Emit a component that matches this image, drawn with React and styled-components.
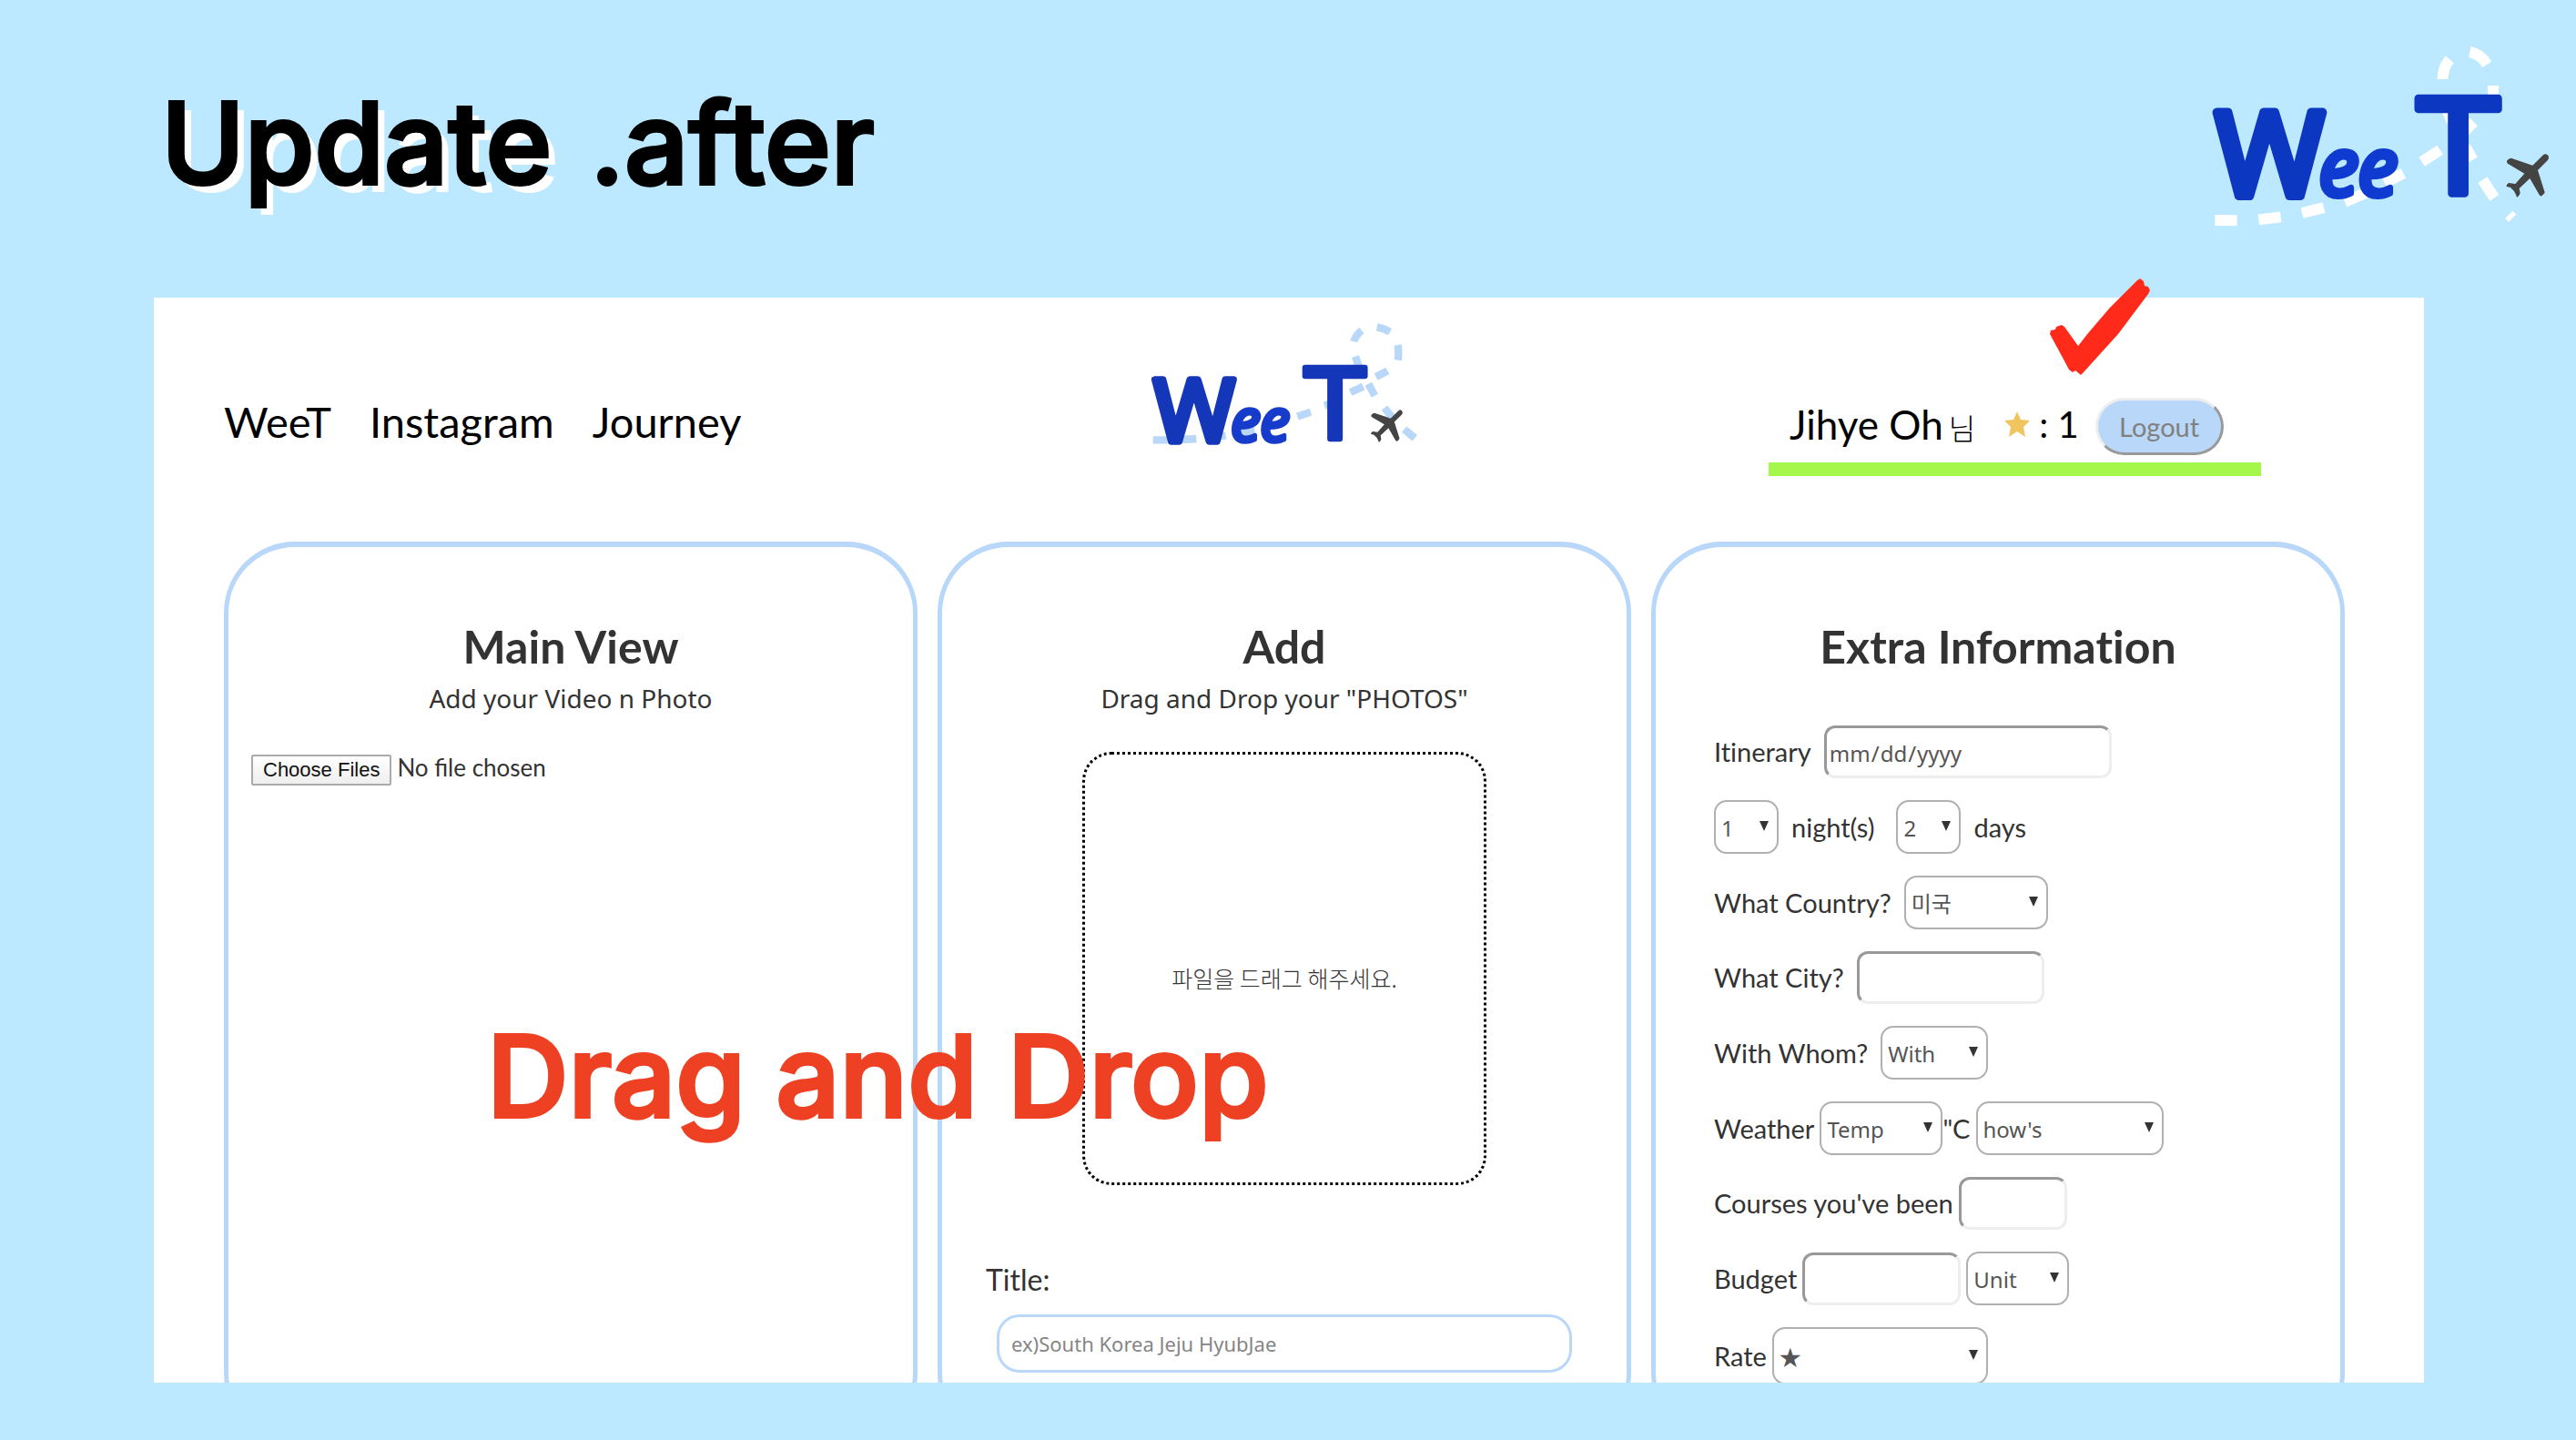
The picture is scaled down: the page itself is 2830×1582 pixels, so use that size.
import React from "react";
import styled, { createGlobalStyle, css } from "styled-components";

const sky = "#bce9ff";
const line = "#b9d7f8";
const hand = `Lato, "Noto Sans CJK KR", sans-serif`;
const plain = `"Noto Sans", "Noto Sans CJK KR", sans-serif`;
const round = `Inter, "Noto Sans CJK KR", sans-serif`;

const GlobalStyle = createGlobalStyle`
  * { box-sizing: border-box; }
  body { margin: 0; background: ${sky}; }
`;

const Slide = styled.div`
  height: 100vh;
  padding: 0 167px 63px 169px;
  display: flex;
  flex-direction: column;
  overflow: hidden;
  background: ${sky};
  font-family: ${hand};
  font-variant-ligatures: none;
  color: #333;
`;

const SlideHeader = styled.header`
  display: flex;
  justify-content: space-between;
  align-items: flex-start;
  height: 327px;
  flex: none;
  margin-right: -167px;
  padding-top: 30px;
`;

const bigText = css`
  margin: 0;
  font-family: ${round};
  font-size: 124px;
  line-height: 124px;
  font-weight: 500;
  -webkit-text-stroke: 4px currentColor;
  white-space: nowrap;
`;

const SlideTitle = styled.h1`
  ${bigText}
  display: flex;
  gap: 42px;
  padding: 65px 0 0 8px;
  color: #000;
`;

const Shadowed = styled.span`
  text-shadow: 9px 9px 0 #fff;
`;

const Panel = styled.main`
  position: relative;
  flex: 1;
  min-height: 0;
  display: flex;
  flex-direction: column;
  padding: 0 87px 0 77px;
  background: #fff;
`;

const Callout = styled.p`
  ${bigText}
  position: absolute;
  left: 366px;
  top: 793px;
  color: #ee4023;
  pointer-events: none;
`;

const SiteHeader = styled.header`
  flex: none;
  display: grid;
  grid-template-columns: 1fr auto 1fr;
  align-items: start;
  height: 268px;
  padding-top: 3px;
  color: #000;
`;

const Nav = styled.nav`
  display: flex;
  gap: 42px;
  padding-top: 104px;
`;

const NavLink = styled.a`
  font-size: 47px;
  line-height: 58px;
  color: inherit;
  text-decoration: none;
`;

const Account = styled.div`
  position: relative;
  justify-self: end;
  display: flex;
  align-items: flex-start;
  width: 541px;
  margin: 107px 92px 0 0;
  padding: 0 23px 8px;
  border-bottom: 15px solid #a6f74c;
  font-size: 44px;
  line-height: 58px;
`;

const UserName = styled.span`
  margin-right: 32px;
`;

const Suffix = styled.span`
  margin-left: 6px;
  font-family: "Noto Sans CJK KR", sans-serif;
  font-size: 32px;
  line-height: 32px;
  font-weight: 300;
`;

const Points = styled.span`
  display: flex;
  align-items: center;
  gap: 10px;
  margin-right: 18px;
  font-size: 40px;
`;

const LogoutButton = styled.button`
  width: 141px;
  height: 63px;
  padding: 0;
  border: 3px solid;
  border-color: #eee #999 #999 #eee;
  border-radius: 32px;
  background: ${line};
  color: #808080;
  font-family: ${hand};
  font-size: 29px;
`;

const Tick = styled.svg`
  position: absolute;
  right: 121px;
  top: -132px;
`;

const Cards = styled.div`
  flex: 1;
  min-height: 0;
  overflow: hidden;
  display: grid;
  grid-template-columns: repeat(3, minmax(0, 1fr));
  gap: 22px;
`;

const Card = styled.section`
  display: flex;
  flex-direction: column;
  padding: 79px ${(p) => p.$side}px 60px;
  border: 5px solid ${line};
  border-top-width: 6px;
  border-radius: 78px;
`;

const CardTitle = styled.h2`
  margin: 0;
  font-size: 50px;
  line-height: 60px;
  font-weight: 700;
  text-align: center;
`;

const CardNote = styled.p`
  margin: 8px 0 40px;
  font-family: ${plain};
  font-size: 28px;
  line-height: 38px;
  text-align: center;
`;

const FileInput = styled.input`
  font-family: ${hand};
  font-size: 26px;
  line-height: 34px;
  color: #333;
  &::file-selector-button {
    height: 34px;
    margin: 0 6px 0 0;
    padding: 0 11px;
    border: 2px solid #aaa;
    border-radius: 2px;
    background: linear-gradient(#fff, #eee);
    color: #111;
    font-family: "Liberation Sans", sans-serif;
    font-size: 22px;
  }
`;

const DropZone = styled.div`
  align-self: center;
  display: grid;
  place-items: center;
  width: 444px;
  height: 476px;
  padding-top: 20px;
  border: 3px dotted #000;
  border-radius: 32px;
  font-family: "Noto Sans CJK KR", sans-serif;
  font-weight: 300;
  font-size: 25px;
`;

const TitleLabel = styled.label`
  margin: 84px 0 18px;
  font-size: 32px;
  line-height: 40px;
`;

const TitleInput = styled.input`
  margin: 0 12px;
  height: 64px;
  padding: 0 13px;
  border: 3px solid ${line};
  border-radius: 25px;
  font-family: ${plain};
  font-size: 22px;
  &::placeholder { color: #858585; }
`;

const Form = styled.form`
  display: flex;
  flex-direction: column;
  gap: 24px;
  padding-top: 57px;
`;

const Row = styled.div`
  display: flex;
  align-items: center;
  gap: ${(p) => p.$gap ?? 14}px;
  font-size: 29px;
  line-height: 40px;
  white-space: nowrap;
`;

const field = css`
  width: ${(p) => p.$w}px;
  font-family: ${plain};
  font-size: 24px;
  color: #555;
  background: #fff;
`;

const Field = styled.input`
  ${field}
  height: 58px;
  padding: 2px 2px 0;
  border: 3px solid;
  border-color: #999 #eee #eee #999;
  border-radius: 12px;
  &::-webkit-calendar-picker-indicator { display: none; }
`;

const SelectBox = styled.span`
  display: inline-grid;
  align-items: center;
  & > * { grid-area: 1 / 1; }
  & > svg {
    justify-self: end;
    margin: 0 11px 2px 0;
    pointer-events: none;
  }
`;

const NativeSelect = styled.select`
  ${field}
  height: ${(p) => p.$h || 59}px;
  padding: 2px 6px 0;
  border: 2px solid #b0b0b0;
  border-radius: 14px;
  appearance: none;
`;

function Select({ value, w, h, ...rest }) {
  return (
    <SelectBox>
      <NativeSelect $w={w} $h={h} {...rest}>
        <option>{value}</option>
      </NativeSelect>
      <svg width="10" height="11" viewBox="0 0 10 11" aria-hidden="true">
        <path d="M0 0h10L5 11z" fill="#333" />
      </svg>
    </SelectBox>
  );
}

const Logo = styled.svg`
  overflow: visible;
`;

const LogoMark = ({ main, small }) => (
  <g>
    <g fill={main} stroke={main} strokeLinejoin="round">
      <text x="102" y="556" fontFamily="Noto Sans, sans-serif" fontSize="384" strokeWidth="30">W</text>
      <text x="772" y="545" fontFamily="DejaVu Sans, sans-serif" fontSize="426" strokeWidth="26">T</text>
    </g>
    <text x="442 571" y="556" fontFamily="Noto Sans, sans-serif" fontStyle="italic" fontSize="266" fill={small} stroke={small} strokeWidth="18" strokeLinejoin="round">ee</text>
    <path
      fill="#444"
      d="M1182 421Q1192 413 1199 424Q1202 432 1196 439L1164 471L1187 544Q1186 549 1177 556Q1172 557 1169 552L1138 498L1103 531L1106 547Q1104 554 1097 560Q1093 558 1092 551L1086 540L1074 528L1060 524Q1062 517 1068 513L1090 516L1120 482L1065 449Q1061 445 1062 440Q1067 432 1076 431L1147 455Z"
    />
  </g>
);

const SlideLogo = () => (
  <Logo width="430" height="240" viewBox="0 0 1290 720" role="img" aria-label="Wee T">
    <g fill="none" stroke="#fff" strokeWidth="36">
      <path d="M100 636L173 637M244 634L317 625M387 612L459 594M528 575L597 546M659 513L721 481M782 443L842 404M915 350L953 312M1017 225V192M997 122Q975 88 940 81M874 106Q850 132 851 171M861 262L881 310M925 395L950 437M982 503L1021 562" />
      <path strokeWidth="16" d="M1062 636L1087 611" />
    </g>
    <LogoMark main="#0c37c0" small="#103bd1" />
  </Logo>
);

const SiteLogo = () => (
  <Logo width="360" height="180" viewBox="0 0 1080 540" role="img" aria-label="Wee T">
    <path
      fill="none"
      stroke={line}
      strokeWidth="25"
      d="M107 460H155M200 459L250 456M300 452L347 446M397 438L442 428M583 383L627 368M672 347L705 335M758 303L800 284M842 252L880 232M914 197Q918 170 914 147M888 104Q868 92 845 88M795 99Q774 116 769 136M774 185L785 217M817 275L838 314M870 354L896 387M935 425L970 454"
    />
    <g transform="translate(33 49) scale(0.747)">
      <LogoMark main="#1436b8" small="#173ccb" />
    </g>
  </Logo>
);

export default function App() {
  return (
    <Slide>
      <GlobalStyle />
      <SlideHeader>
        <SlideTitle>
          <Shadowed>Update</Shadowed>
          <span>.after</span>
        </SlideTitle>
        <SlideLogo />
      </SlideHeader>
      <Panel>
        <SiteHeader>
          <Nav>
            <NavLink href="#weet">WeeT</NavLink>
            <NavLink href="#instagram">Instagram</NavLink>
            <NavLink href="#journey">Journey</NavLink>
          </Nav>
          <SiteLogo />
          <Account>
            <UserName>
              Jihye Oh<Suffix>님</Suffix>
            </UserName>
            <Points>
              <svg width="28" height="28" viewBox="0 0 28 28" aria-hidden="true">
                <path fill="#f0c560" d="M14 0L18 9L28 10L21 17L23 28L14 22L5 28L7 17L0 10L10 9Z" />
              </svg>
              <span>: 1</span>
            </Points>
            <LogoutButton type="button">Logout</LogoutButton>
            <Tick width="112" height="108" viewBox="0 0 112 108" aria-hidden="true">
              <path
                fill="#ff2a1a"
                d="M100 1L104 4L105 9L109 10L111 14L109 18L76 62L37 105L35 107L29 102L26 104L22 101L14 86L1 62L2 58L7 57L8 54L14 52L17 54L32 75L43 61L67 33L97 3Z"
              />
            </Tick>
          </Account>
        </SiteHeader>
        <Cards>
          <Card $side={25}>
            <CardTitle>Main View</CardTitle>
            <CardNote>Add your Video n Photo</CardNote>
            <FileInput type="file" multiple aria-label="Video and photo files" />
          </Card>
          <Card $side={48}>
            <CardTitle>Add</CardTitle>
            <CardNote>Drag and Drop your "PHOTOS"</CardNote>
            <DropZone>파일을 드래그 해주세요.</DropZone>
            <TitleLabel htmlFor="title">Title:</TitleLabel>
            <TitleInput id="title" placeholder="ex)South Korea Jeju HyubJae" />
          </Card>
          <Card $side={64}>
            <CardTitle>Extra Information</CardTitle>
            <Form>
              <Row>
                <label htmlFor="date">Itinerary</label>
                <Field id="date" type="date" $w={316} />
              </Row>
              <Row $gap={24}>
                <Row>
                  <Select id="nights" value="1" w={71} />
                  <label htmlFor="nights">night(s)</label>
                </Row>
                <Row>
                  <Select id="days" value="2" w={71} />
                  <label htmlFor="days">days</label>
                </Row>
              </Row>
              <Row>
                <label htmlFor="country">What Country?</label>
                <Select id="country" value="미국" w={158} />
              </Row>
              <Row>
                <label htmlFor="city">What City?</label>
                <Field id="city" $w={206} />
              </Row>
              <Row>
                <label htmlFor="whom">With Whom?</label>
                <Select id="whom" value="With" w={118} />
              </Row>
              <Row $gap={6}>
                <label htmlFor="temp">Weather</label>
                <Row $gap={0}>
                  <Select id="temp" value="Temp" w={135} />
                  <label htmlFor="sky">"C</label>
                </Row>
                <Select id="sky" value="how's" w={206} />
              </Row>
              <Row $gap={6}>
                <label htmlFor="courses">Courses you've been</label>
                <Field id="courses" $w={119} />
              </Row>
              <Row $gap={6}>
                <label htmlFor="budget">Budget</label>
                <Field id="budget" $w={174} />
                <Select aria-label="Currency unit" value="Unit" w={113} />
              </Row>
              <Row $gap={6}>
                <label htmlFor="rate">Rate</label>
                <Select id="rate" value="★" w={237} h={63} />
              </Row>
            </Form>
          </Card>
        </Cards>
        <Callout>Drag and Drop</Callout>
      </Panel>
    </Slide>
  );
}
